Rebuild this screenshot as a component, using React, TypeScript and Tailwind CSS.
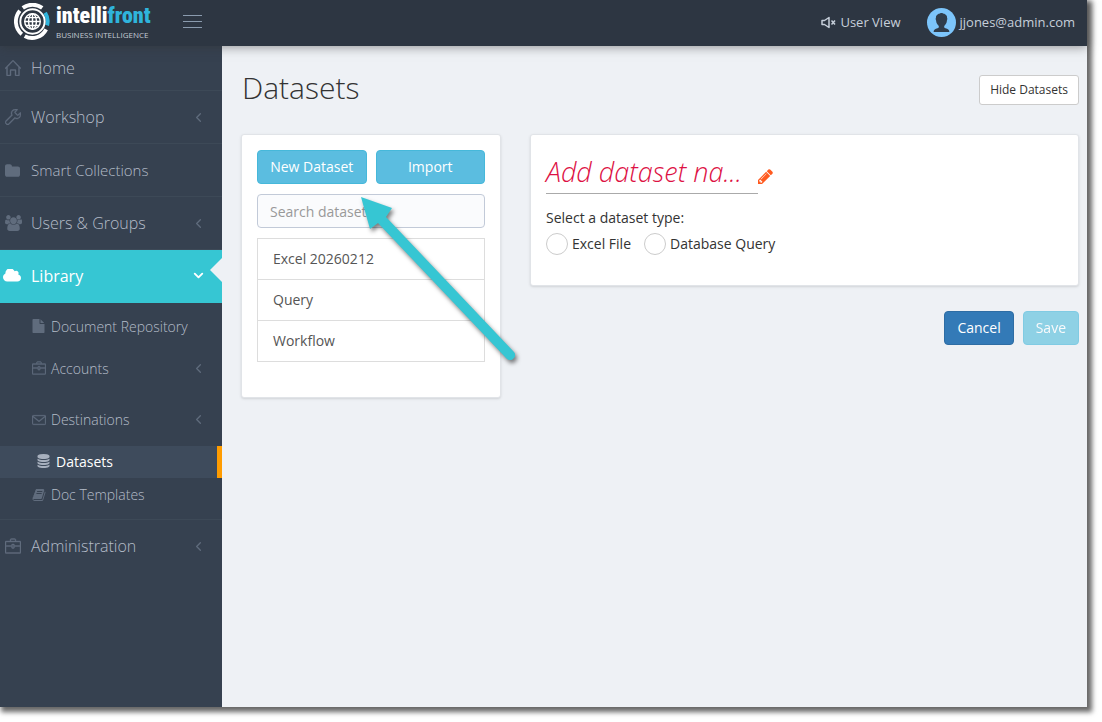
import { useState, type ReactNode } from "react";
import { SlBriefcase, SlEnvolope, SlHome, SlWrench } from "react-icons/sl";
import { FiChevronDown, FiChevronLeft } from "react-icons/fi";

const datasets = ["Excel 20260212", "Query", "Workflow"];

const glyphs = {
  database: {
    viewBox: "0 0 1536 1792",
    d: "M768 768q237 0 443-43t325-127v170q0 69-103 128t-280 93.5-385 34.5-385-34.5-280-93.5-103-128v-170q119 84 325 127t443 43zm0 768q237 0 443-43t325-127v170q0 69-103 128t-280 93.5-385 34.5-385-34.5-280-93.5-103-128v-170q119 84 325 127t443 43zm0-384q237 0 443-43t325-127v170q0 69-103 128t-280 93.5-385 34.5-385-34.5-280-93.5-103-128v-170q119 84 325 127t443 43zm0-1152q208 0 385 34.5t280 93.5 103 128v128q0 69-103 128t-280 93.5-385 34.5-385-34.5-280-93.5-103-128v-128q0-69 103-128t280-93.5 385-34.5z",
  },
  book: {
    viewBox: "0 0 1792 1792",
    d: "M1703 478q40 57 18 129l-275 906q-19 64-76.5 107.5t-122.5 43.5h-923q-77 0-148.5-53.5t-99.5-131.5q-24-67-2-127 0-4 3-27t4-37q1-8-3-21.5t-3-19.5q2-11 8-21t16.5-23.5 16.5-23.5q23-38 45-91.5t30-91.5q3-10 .5-30t-.5-28q3-11 17-28t17-23q21-36 42-92t25-90q1-9-2.5-32t.5-28q4-13 22-30.5t22-22.5q19-26 42.5-84.5t27.5-96.5q1-8-3-25.5t-2-26.5q2-8 9-18t18-23 17-21q8-12 16.5-30.5t15-35 16-36 19.5-32 26.5-23.5 36-11.5 47.5 5.5l-1 3q38-9 51-9h761q74 0 114 56t18 130l-274 906q-36 119-71.5 153.5t-128.5 34.5h-869q-27 0-38 15-11 16-1 43 24 70 144 70h923q29 0 56-15.5t35-41.5l300-987q7-22 5-57 38 15 59 43zm-1064 2q-4 13 2 22.5t20 9.5h608q13 0 25.5-9.5t16.5-22.5l21-64q4-13-2-22.5t-20-9.5h-608q-13 0-25.5 9.5t-16.5 22.5zm-83 256q-4 13 2 22.5t20 9.5h608q13 0 25.5-9.5t16.5-22.5l21-64q4-13-2-22.5t-20-9.5h-608q-13 0-25.5 9.5t-16.5 22.5z",
  },
  pencil: {
    viewBox: "128 128 1536 1536",
    d: "M491 1536l91-91-235-235-91 91v107h128v128h107zm523-928q0-22-22-22-10 0-17 7l-542 542q-7 7-7 17 0 22 22 22 10 0 17-7l542-542q7-7 7-17zm-54-192l416 416-832 832h-416v-416zm683 96q0 53-37 90l-166 166-416-416 166-165q36-38 90-38 53 0 91 38l235 234q37 39 37 91z",
  },
  users: {
    viewBox: "0 0 1920 1792",
    d: "M593 896q-162 5-265 128h-134q-82 0-138-40.5t-56-118.5q0-353 124-353 6 0 43.5 21t97.5 42.5 119 21.5q67 0 133-23-5 37-5 66 0 159 93 290zm1071 637q0 120-73 189.5t-194 69.5h-874q-121 0-194-69.5t-73-189.5q0-53 3.5-103.5t14-109 26.5-108.5 43-97.5 62-81 85.5-53.5 111.5-20q10 0 43 21.5t73 48 107 48 135 21.5 135-21.5 107-48 73-48 43-21.5q61 0 111.5 20t85.5 53.5 62 81 43 97.5 26.5 108.5 14 109 3.5 103.5zm-1024-1277q0 106-75 181t-181 75-181-75-75-181 75-181 181-75 181 75 75 181zm704 384q0 159-112.5 271.5t-271.5 112.5-271.5-112.5-112.5-271.5 112.5-271.5 271.5-112.5 271.5 112.5 112.5 271.5zm576 225q0 78-56 118.5t-138 40.5h-134q-103-123-265-128 93-131 93-290 0-29-5-66 66 23 133 23 59 0 119-21.5t97.5-42.5 43.5-21q124 0 124 353zm-128-609q0 106-75 181t-181 75-181-75-75-181 75-181 181-75 181 75 75 181z",
  },
  folder: {
    viewBox: "64 128 1664 1408",
    d: "M1728 608v704q0 92-66 158t-158 66h-1216q-92 0-158-66t-66-158v-960q0-92 66-158t158-66h320q92 0 158 66t66 158v32h672q92 0 158 66t66 158z",
  },
  file: {
    viewBox: "128 0 1536 1792",
    d: "M1152 512v-472q22 14 36 28l408 408q14 14 28 36h-472zm-128 32q0 40 28 68t68 28h544v1056q0 40-28 68t-68 28h-1344q-40 0-68-28t-28-68v-1600q0-40 28-68t68-28h800v544z",
  },
  cloud: {
    viewBox: "64 256 1920 1280",
    d: "M1984 1152q0 159-112.5 271.5t-271.5 112.5h-1088q-185 0-316.5-131.5t-131.5-316.5q0-132 71-241.5t187-163.5q-2-28-2-43 0-212 150-362t362-150q158 0 286.5 88t187.5 230q70-62 166-62 106 0 181 75t75 181q0 75-41 138 129 30 213 134.5t84 239.5z",
  },
};

function Glyph({ name, className }: { name: keyof typeof glyphs; className?: string }) {
  return (
    <svg className={className} viewBox={glyphs[name].viewBox} fill="currentColor" aria-hidden="true">
      <path d={glyphs[name].d} />
    </svg>
  );
}

function Logo() {
  return (
    <a href="#" className="flex items-center gap-[5px]">
      <svg className="h-[37px] w-[37px]" viewBox="0 0 38 38" fill="none" aria-hidden="true">
        <g strokeWidth="4">
          <path d="M9 5A17 17 0 0 1 29 5" stroke="#fff" />
          <path d="M32 10A16 16 0 0 1 34 23" stroke="#2fb4dc" />
          <path d="M33 27A16 16 0 0 1 11 34" stroke="#fff" />
          <path d="M8 32A17 17 0 0 1 6 8" stroke="#fff" />
        </g>
        <circle cx="19" cy="19" r="12.5" stroke="#fff" strokeWidth="2" />
        <g stroke="#fff" strokeWidth="1.5">
          <circle cx="19" cy="19" r="8" />
          <ellipse cx="19" cy="19" rx="4" ry="8" />
          <path d="M19 11v16M11 19h16M12.5 15h13M12.5 23h13" />
        </g>
      </svg>
      <span className="flex flex-col">
        <span className="font-['Roboto_Condensed','Roboto'] text-[22px] leading-[26px] font-black text-white">
          intelli<span className="text-[#2fb4dc]">front</span>
        </span>
        <span className="text-[8px] leading-[12px] text-[#c3cad3]">BUSINESS INTELLIGENCE</span>
      </span>
    </a>
  );
}

function MuteIcon() {
  return (
    <svg className="h-[13px] w-[15px]" viewBox="0 0 15 13" fill="none" stroke="currentColor" strokeWidth="1.5" aria-hidden="true">
      <path d="M1 4.500H3.500L8 1.500V11.500L3.500 8.500H1Z" strokeLinejoin="round" />
      <path d="M10.500 4.500L14 8.500M14 4.500L10.500 8.500" />
    </svg>
  );
}

function Avatar() {
  return (
    <svg className="h-[29px] w-[29px]" viewBox="0 0 29 29" aria-hidden="true">
      <circle cx="14.5" cy="14.5" r="14.5" fill="#7cc5fb" />
      <path
        fill="#2f3d4c"
        d="M14.500 5c1 0 1.500.4 2.200.7 1 0 1.700.6 2.200 1.400.9.6 1.200 1.500 1.100 2.500.5 1 .4 2-.1 2.900-.1 2.300-1.100 4.200-2.700 5.400v1.200c0 .7.5 1 1.300 1.200 2.300.6 3.800 1.300 3.900 3.700H6.600c.1-2.400 1.600-3.100 3.900-3.700.8-.2 1.300-.5 1.300-1.200v-1.200c-1.600-1.200-2.600-3.100-2.700-5.400-.5-.9-.6-1.900-.1-2.900-.1-1 .2-1.900 1.100-2.500.5-.8 1.200-1.400 2.200-1.400.7-.3 1.200-.7 2.200-.7z"
      />
    </svg>
  );
}

function NavItem({ icon, label, className, chevron }: { icon: ReactNode; label: string; className: string; chevron?: boolean }) {
  return (
    <li>
      <a href="#" className={`flex items-center pr-[16px] pl-[5px] font-light text-[#b4bcc8] ${className}`}>
        <span className="w-[26px] text-[16px] text-[#606c7d]">{icon}</span>
        <span className="flex-1">{label}</span>
        {chevron ? <FiChevronLeft className="text-[15px] text-[#606c7d]" /> : null}
      </a>
    </li>
  );
}

function SubItem({ icon, label, className, chevron }: { icon: ReactNode; label: string; className: string; chevron?: boolean }) {
  return (
    <li>
      <a href="#" className={`flex items-center pr-[16px] pl-[32px] text-[14px] font-light text-[#b4bcc8] ${className}`}>
        <span className="w-[19px] text-[14px] text-[#606c7d]">{icon}</span>
        <span className="flex-1">{label}</span>
        {chevron ? <FiChevronLeft className="text-[15px] text-[#606c7d]" /> : null}
      </a>
    </li>
  );
}

function Sidebar() {
  return (
    <nav className="w-[222px] shrink-0 bg-[#364150]">
      <ul>
        <NavItem icon={<SlHome stroke="currentColor" strokeWidth={24} />} label="Home" className="h-[45px] border-b border-[#3d4957] text-[16px]" />
        <NavItem icon={<SlWrench stroke="currentColor" strokeWidth={24} />} label="Workshop" className="h-[53px] border-b border-[#3d4957] text-[16px]" chevron />
        <NavItem icon={<Glyph name="folder" className="h-[13px] w-[15px]" />} label="Smart Collections" className="h-[53px] border-b border-[#3d4957] text-[15px]" />
        <NavItem icon={<Glyph name="users" className="h-[16px] w-[17px]" />} label="Users & Groups" className="h-[53px] border-b border-[#3d4957] text-[16px]" chevron />
        <li>
          <a href="#" className="relative flex h-[53px] items-center bg-[#36c6d3] pr-[16px] pb-[2px] pl-[3px] text-[16px] text-white">
            <Glyph name="cloud" className="mr-[10px] h-[13px] w-[18px]" />
            <span className="flex-1">Library</span>
            <FiChevronDown className="text-[15px]" strokeWidth={3} />
            <span className="absolute top-[8px] right-0 border-y-[12px] border-r-[12px] border-y-transparent border-r-[#eef1f5]" />
          </a>
          <ul className="border-b border-[#3d4957] pt-[7px] pb-[8px]">
            <SubItem icon={<Glyph name="file" className="h-[14px] w-[13px]" />} label="Document Repository" className="h-[32px]" />
            <SubItem icon={<SlBriefcase stroke="currentColor" strokeWidth={24} />} label="Accounts" className="h-[52px]" chevron />
            <SubItem icon={<SlEnvolope stroke="currentColor" strokeWidth={24} />} label="Destinations" className="h-[51px]" chevron />
            <li className="pt-px">
              <a href="#" className="flex h-[32px] items-center border-r-[5px] border-[#ff9c00] bg-[#3e4b5c] pb-[2px] pl-[37px] text-[14px] text-white">
                <Glyph name="database" className="mr-[6px] h-[14px] w-[13px] text-[#a7b0be]" />
                Datasets
              </a>
            </li>
            <SubItem icon={<Glyph name="book" className="h-[14px] w-[14px]" />} label="Doc Templates" className="h-[33px]" />
          </ul>
        </li>
        <NavItem icon={<SlBriefcase stroke="currentColor" strokeWidth={24} />} label="Administration" className="h-[52px] text-[16px]" chevron />
      </ul>
    </nav>
  );
}

function DatasetList() {
  const [search, setSearch] = useState("");
  const visible = datasets.filter((name) => name.toLowerCase().includes(search.toLowerCase()));

  return (
    <section className="relative w-[260px] shrink-0 rounded-[3px] border border-[#e1e4e8] bg-white px-[15px] pt-[15px] pb-[35px] shadow-sm">
      <div className="grid grid-cols-2 gap-[9px]">
        <button type="button" className="h-[34px] rounded-[4px] border border-[#46b8da] bg-[#5bbde0] pb-[2px] text-[14px] text-white">New Dataset</button>
        <button type="button" className="h-[34px] rounded-[4px] border border-[#46b8da] bg-[#5bbde0] pb-[2px] text-[14px] text-white">Import</button>
      </div>
      <input
        className="mt-[10px] h-[34px] w-full rounded-[4px] border border-[#c2cad8] bg-[#fafbfd] px-[12px] text-[14px] text-[#555] outline-none placeholder:text-[#999]"
        aria-label="Search datasets"
        placeholder="Search datasets"
        value={search}
        onChange={(event) => setSearch(event.target.value)}
      />
      <ul className="mt-[10px] divide-y divide-[#ddd] border border-[#ddd]">
        {visible.map((name) => (
          <li key={name}>
            <a href="#" className="block px-[15px] py-[10px] text-[14px] leading-[20px] text-[#555]">{name}</a>
          </li>
        ))}
      </ul>
      {/* pointer to the New Dataset button */}
      <svg className="pointer-events-none absolute top-[60px] left-[117px] h-[176px] w-[166px] drop-shadow-[2px_3px_2px_rgba(0,0,0,0.5)]" viewBox="0 0 166 176" aria-hidden="true">
        <path d="M2 2L33 13L27 22L155 157A5 5 0 0 1 148 164L19 28L11 34Z" fill="#36c6d3" />
      </svg>
    </section>
  );
}

function DatasetForm() {
  const [type, setType] = useState("");

  return (
    <div className="min-w-0 flex-1">
      <section className="rounded-[3px] border border-[#e1e4e8] bg-white px-[15px] pt-[19px] pb-[30px] shadow-sm">
        <div className="flex items-center">
          <button type="button" className="w-[212px] border-b border-[#aaa] pb-[3px] text-left text-[27px] leading-[36px] font-light text-[#dd1144] italic">
            Add dataset na...
          </button>
          <button type="button" aria-label="Edit name" className="mt-[5px] text-[#ff5a1f]">
            <Glyph name="pencil" className="h-[15px] w-[15px]" />
          </button>
        </div>
        <fieldset className="mt-[14px] text-[14px] text-[#333]">
          <legend className="leading-[20px]">Select a dataset type:</legend>
          <div className="mt-[5px] flex gap-[13px]">
            {["Excel File", "Database Query"].map((option) => (
              <label key={option} className="flex items-center gap-[4px] leading-[22px]">
                <input
                  type="radio"
                  name="dataset-type"
                  className="h-[22px] w-[22px] appearance-none rounded-full border border-[#ccc] bg-white checked:border-[6px] checked:border-[#36c6d3]"
                  checked={type === option}
                  onChange={() => setType(option)}
                />
                {option}
              </label>
            ))}
          </div>
        </fieldset>
      </section>
      <div className="mt-[25px] flex justify-end gap-[9px] text-[14px] text-white">
        <button type="button" className="h-[34px] rounded-[4px] border border-[#2e6da4] bg-[#337ab7] px-[12px] pb-[2px]">Cancel</button>
        <button type="button" disabled={!type} className="h-[34px] rounded-[4px] border border-[#46b8da] bg-[#5bc0de] px-[12px] pb-[2px] disabled:opacity-65">Save</button>
      </div>
    </div>
  );
}

export default function App() {
  return (
    <div className="min-h-screen bg-white pr-[15px] pb-[15px] font-['Open_Sans',sans-serif]">
      <div className="flex min-h-[calc(100vh-15px)] flex-col bg-[#eef1f5] shadow-[3px_3px_5px_2px_rgba(0,0,0,0.6)]">
        <header className="z-10 flex h-[46px] items-center bg-[#2d3642] pr-[12px] pb-[3px] pl-[14px] shadow-[0_1px_10px_rgba(50,50,50,0.5)]">
          <Logo />
          <button type="button" aria-label="Toggle menu" className="ml-[32px] flex w-[19px] flex-col gap-[5px]">
            <span className="h-px w-full bg-[#8a9bae]" />
            <span className="h-px w-full bg-[#8a9bae]" />
            <span className="h-px w-full bg-[#8a9bae]" />
          </button>
          <div className="ml-auto flex items-center pt-[2px] text-[13px] text-[#c6cfda]">
            <a href="#" className="flex items-center gap-[4px] font-medium">
              <MuteIcon />
              User View
            </a>
            <a href="#" className="ml-[26px] flex items-center gap-[4px]">
              <Avatar />
              jjones@admin.com
            </a>
          </div>
        </header>
        <div className="flex flex-1">
          <Sidebar />
          <main className="min-w-0 flex-1 pt-[24px] pr-[8px] pl-[19px]">
            <div className="flex items-start justify-between">
              <h1 className="pl-px text-[30px] leading-[36px] font-light text-[#333]">Datasets</h1>
              <button type="button" className="mt-[5px] h-[30px] rounded-[3px] border border-[#ccc] bg-white px-[10px] text-[12px] text-[#333]">Hide Datasets</button>
            </div>
            <div className="mt-[28px] flex items-start gap-[29px]">
              <DatasetList />
              <DatasetForm />
            </div>
          </main>
        </div>
      </div>
    </div>
  );
}
